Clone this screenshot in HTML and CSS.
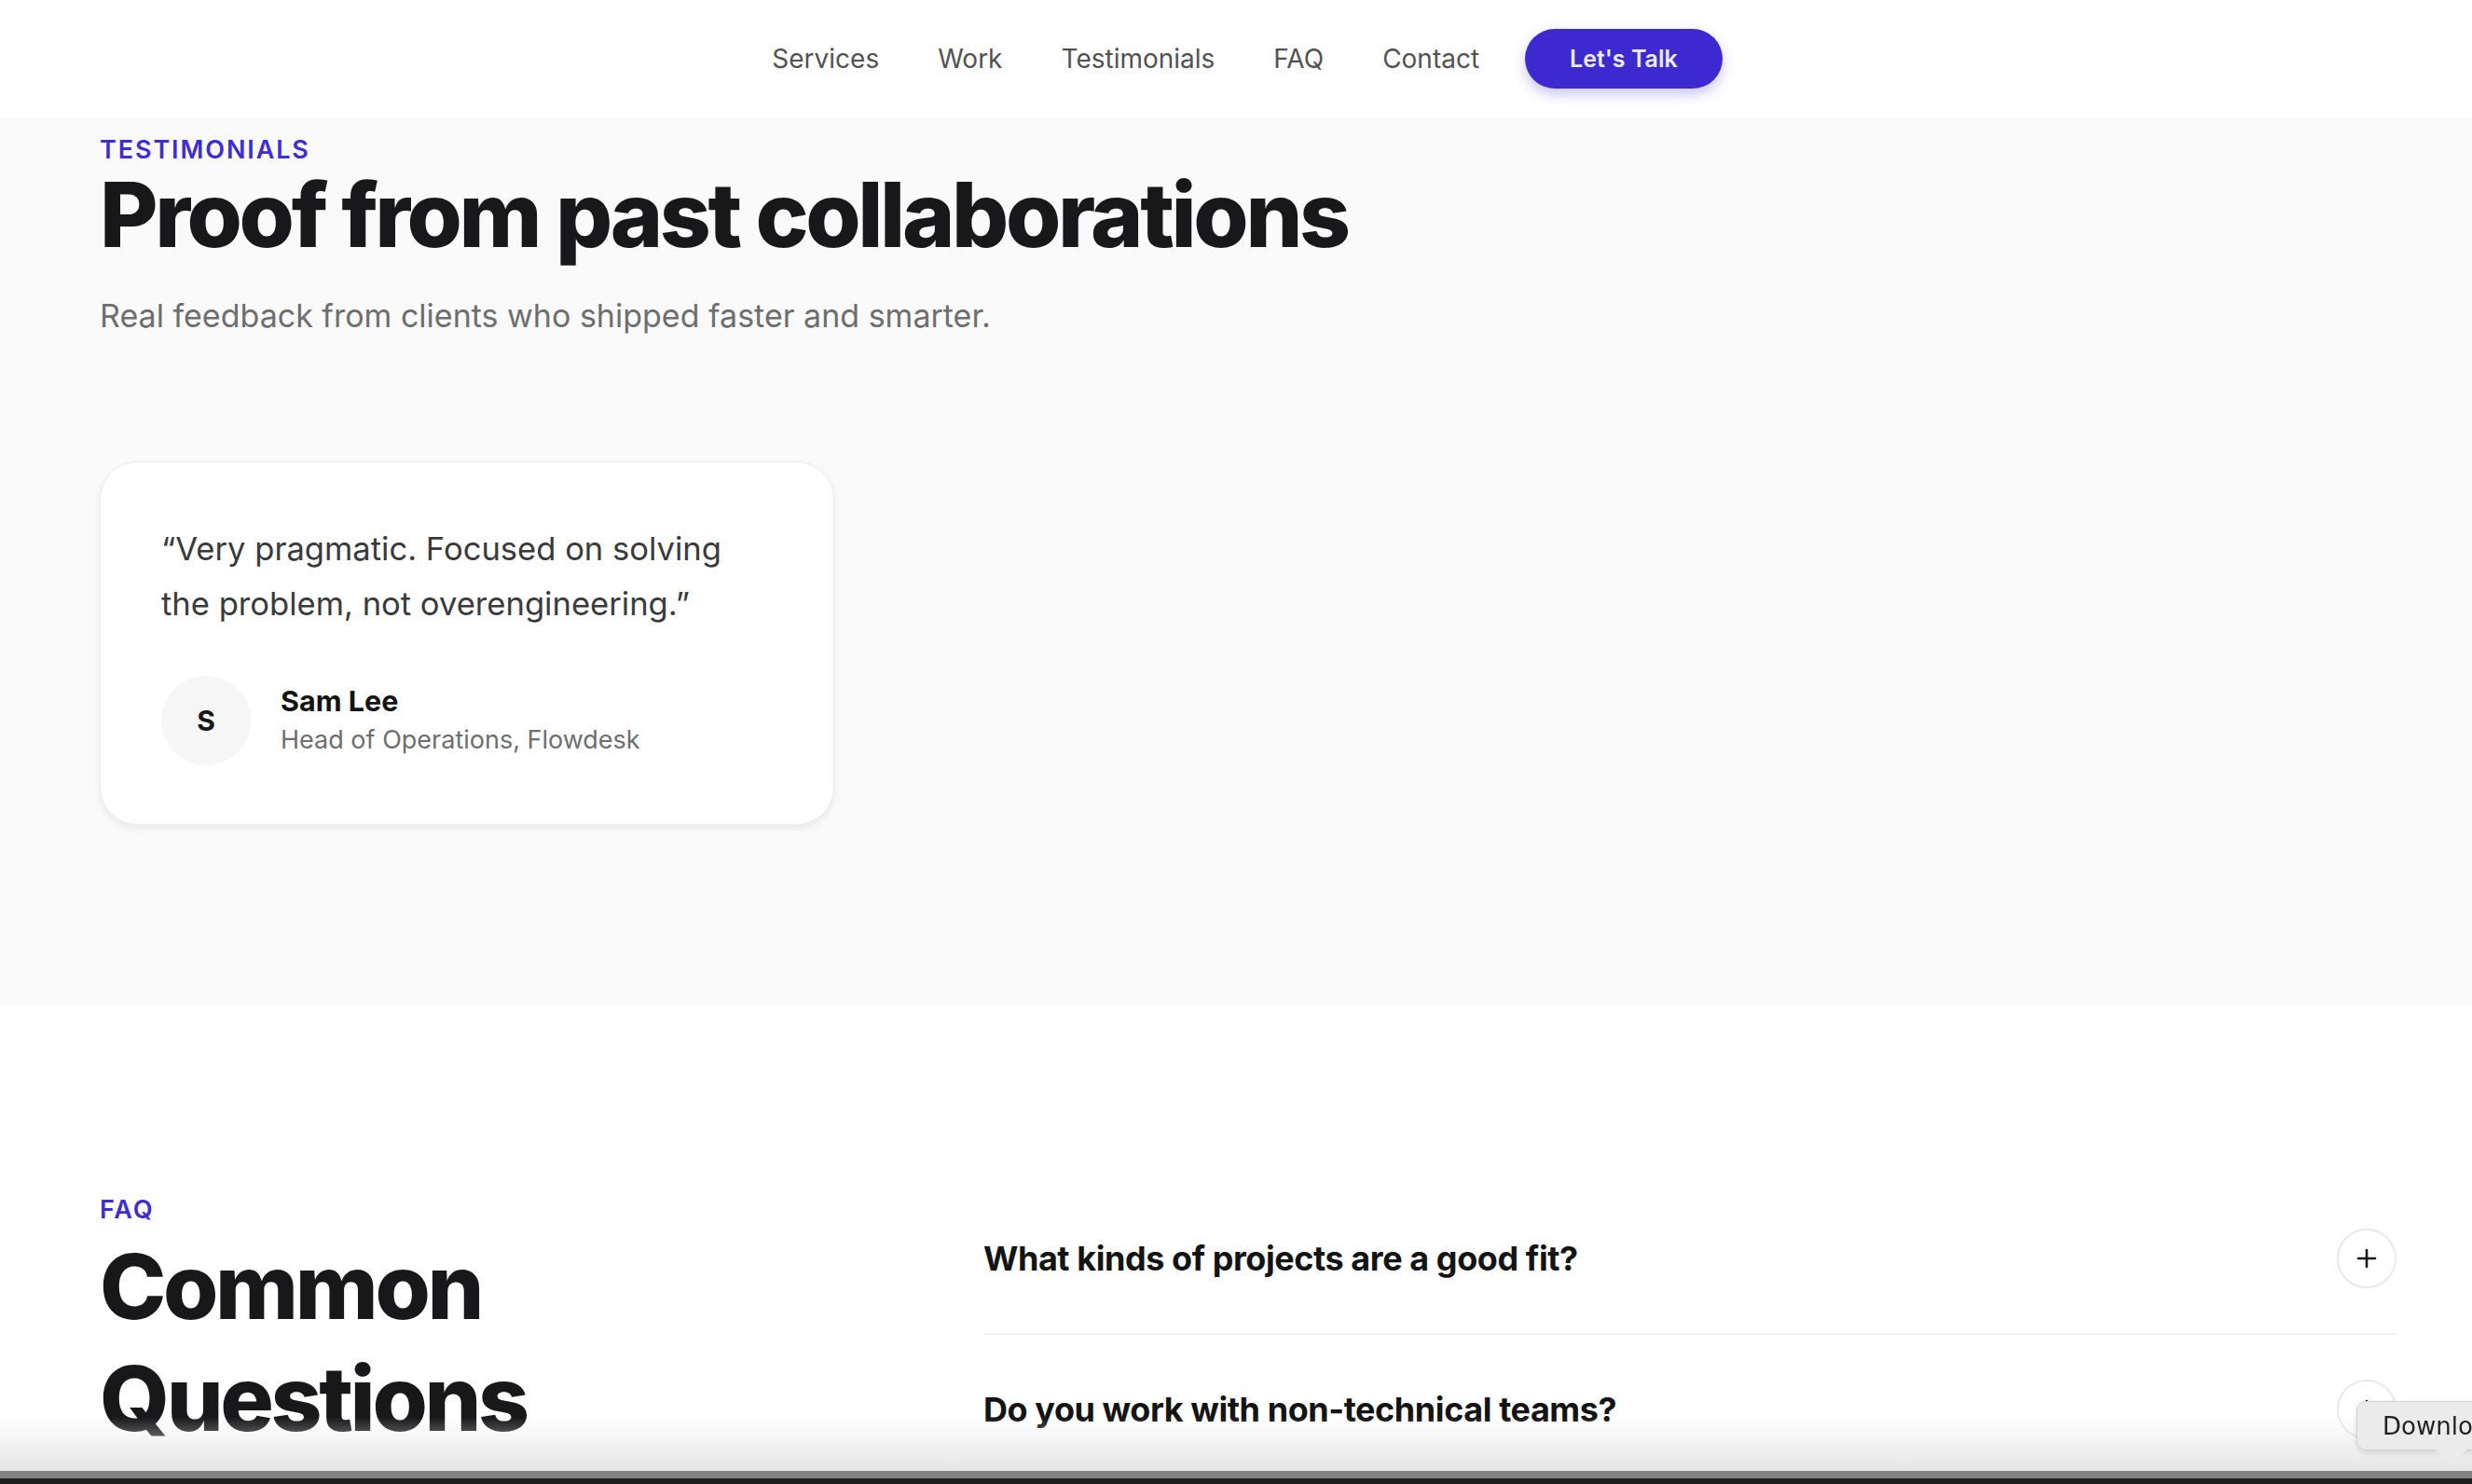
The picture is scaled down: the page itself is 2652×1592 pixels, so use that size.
FILE: index.html
```html
<!DOCTYPE html>
<html lang="en">
<head>
    <meta charset="UTF-8">
    <meta name="viewport" content="width=device-width, initial-scale=1.0">
    <title>Testimonials &amp; FAQ</title>
    <link rel="stylesheet" href="styles.css">
</head>
<body>
    <header class="nav">
        <a href="#services">Services</a>
        <a href="#work">Work</a>
        <a href="#testimonials">Testimonials</a>
        <a href="#faq">FAQ</a>
        <a href="#contact">Contact</a>
        <a href="#contact" class="nav-cta">Let's Talk</a>
    </header>

    <section id="testimonials" class="testimonials">
        <p class="eyebrow">TESTIMONIALS</p>
        <h2 class="title">Proof from past collaborations</h2>
        <p class="lead">Real feedback from clients who shipped faster and smarter.</p>

        <div class="cards">
            <div class="card">
                <p class="quote">“Very pragmatic. Focused on solving the problem, not overengineering.”</p>
                <div class="author">
                    <div class="avatar">S</div>
                    <div>
                        <div class="author-name">Sam Lee</div>
                        <div class="author-role">Head of Operations, Flowdesk</div>
                    </div>
                </div>
            </div>
        </div>
    </section>

    <section id="faq" class="faq">
        <div class="faq-intro">
            <p class="eyebrow">FAQ</p>
            <h2 class="title title-stack">Common Questions</h2>
        </div>
        <div class="faq-list">
            <div class="faq-item">
                <span>What kinds of projects are a good fit?</span>
                <button class="toggle" aria-label="Expand">
                    <svg width="22" height="22" viewBox="0 0 22 22"><path d="M11 2v18M2 11h18" stroke="#18181b" stroke-width="2.6" stroke-linecap="round"/></svg>
                </button>
            </div>
            <div class="faq-item">
                <span>Do you work with non-technical teams?</span>
                <button class="toggle" aria-label="Expand">
                    <svg width="22" height="22" viewBox="0 0 22 22"><path d="M11 2v18M2 11h18" stroke="#18181b" stroke-width="2.6" stroke-linecap="round"/></svg>
                </button>
            </div>
        </div>
    </section>

    <div class="window-edge"></div>
    <div class="tooltip">Download</div>
</body>
</html>
```

FILE: styles.css
```css
* {
    box-sizing: border-box;
}
body {
    margin: 0;
    font-family: Inter, "Noto Sans", sans-serif;
    color: #18181b;
    background: #fff;
    overflow: hidden;
}
a {
    text-decoration: none;
}

/* top bar */
.nav {
    height: 126px;
    display: flex;
    align-items: center;
    justify-content: center;
    gap: 63px;
    padding-left: 24px;
    background: #fff;
}
.nav a {
    font-size: 28px;
    color: #525252;
}
.nav .nav-cta {
    display: flex;
    align-items: center;
    height: 64px;
    padding: 0 48px;
    margin-left: -14px;
    border-radius: 999px;
    background: #3c2ad0;
    color: #ecebff;
    font-size: 25px;
    font-weight: 600;
    box-shadow: 0 6px 14px rgba(60, 42, 208, 0.28);
}

/* shared headings */
.eyebrow {
    margin: 0;
    font-size: 27px;
    line-height: 40px;
    font-weight: 600;
    letter-spacing: 0.07em;
    color: #3d2dd2;
}
.title {
    margin: 0;
    font-size: 96px;
    line-height: 1.1;
    font-weight: 800;
    letter-spacing: -0.035em;
    color: #18181b;
}

/* testimonials */
.testimonials {
    background: #fafafa;
    padding: 15px 81px 194px 107px;
}
.testimonials .title {
    margin-top: -3px;
}
.lead {
    margin: 29px 0 0;
    font-size: 34px;
    line-height: 51px;
    color: #6e6e6e;
}
.cards {
    margin-top: 131px;
    display: grid;
    grid-template-columns: 788px;
}
.card {
    background: #fff;
    border: 1px solid #ebebeb;
    border-radius: 40px;
    padding: 63px 72px 63px 65px;
    box-shadow: 0 4px 8px rgba(0, 0, 0, 0.07);
}
.quote {
    margin: 0;
    font-size: 34.6px;
    line-height: 59px;
    color: #3a3a3d;
}
.author {
    margin-top: 48px;
    display: flex;
    align-items: center;
    gap: 32px;
}
.avatar {
    width: 96px;
    height: 96px;
    border-radius: 50%;
    background: #f6f6f6;
    display: flex;
    align-items: center;
    justify-content: center;
    font-size: 30px;
    font-weight: 700;
    color: #18181b;
}
.author-name {
    font-size: 30.5px;
    line-height: 42px;
    font-weight: 700;
    color: #141414;
}
.author-role {
    font-size: 27px;
    line-height: 42px;
    color: #6e6e6e;
}

/* faq */
.faq {
    display: grid;
    grid-template-columns: 820px 1fr;
    gap: 128px;
    padding: 191px 81px 0 107px;
}
.faq-intro .eyebrow {
    margin-top: 8px;
}
.title-stack {
    margin-top: 2px;
    line-height: 120px;
}
.faq-item {
    display: flex;
    align-items: center;
    justify-content: space-between;
    padding: 48px 0;
    border-bottom: 2px solid #f1f1f1;
    font-size: 36px;
    font-weight: 700;
    letter-spacing: -0.012em;
    color: #141414;
}
.toggle {
    width: 64px;
    height: 64px;
    border-radius: 50%;
    border: 2px solid #e9e9e9;
    background: #fff;
    display: flex;
    align-items: center;
    justify-content: center;
    padding: 0;
}

/* window chrome over the page bottom */
.window-edge {
    position: fixed;
    left: 0;
    right: 0;
    bottom: 0;
    height: 72px;
    pointer-events: none;
    background: linear-gradient(to bottom, rgba(230, 230, 230, 0) 0, rgba(228, 228, 228, 0.95) 58px, #828282 58px, #828282 66px, #1c1c1c 66px);
}
.tooltip {
    position: fixed;
    left: 2528px;
    top: 1503px;
    height: 53px;
    padding: 0 0 0 27px;
    width: 160px;
    display: flex;
    align-items: center;
    background: #ebebeb;
    border: 1px solid #d2d2d2;
    border-radius: 10px;
    box-shadow: 0 2px 6px rgba(0, 0, 0, 0.12);
    font-family: "DejaVu Sans", sans-serif;
    font-size: 26px;
    color: #222;
    white-space: nowrap;
}
.tooltip::after {
    content: "";
    position: absolute;
    left: 83px;
    bottom: -17px;
    border-left: 17px solid transparent;
    border-right: 17px solid transparent;
    border-top: 17px solid #ebebeb;
}
```
